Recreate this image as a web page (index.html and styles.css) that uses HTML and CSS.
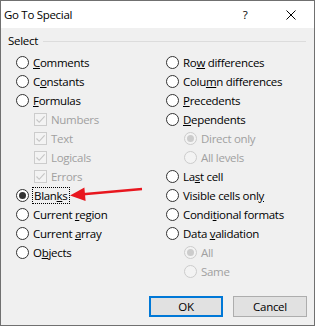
FILE: index.html
```html
<!DOCTYPE html>
<html lang="en">
<head>
    <meta charset="UTF-8">
    <title>Go To Special</title>
    <link rel="stylesheet" href="styles.css">
</head>
<body>
    <div class="dialog">
        <header class="titlebar">
            <span class="title">Go To Special</span>
            <span class="help">?</span>
            <span class="close">
                <svg width="10" height="10" viewBox="0 0 10 10"><path d="M0.5 0.5L9.5 9.5M9.5 0.5L0.5 9.5" stroke="#000" stroke-width="1"/></svg>
            </span>
        </header>

        <main class="content">
            <div class="group-head">
                <span>Select</span>
                <span class="group-line"></span>
            </div>

            <section class="options">
                <!-- left column -->
                <div class="col">
                    <div class="row"><span class="radio"></span><span><u>C</u>omments</span></div>
                    <div class="row"><span class="radio"></span><span>C<u>o</u>nstants</span></div>
                    <div class="row"><span class="radio"></span><span><u>F</u>ormulas</span></div>
                    <div class="row sub disabled"><span class="check"><svg width="11" height="11" viewBox="0 0 11 11"><path d="M1.5 5.5L4.2 8.3L9.6 2.4" fill="none" stroke="#c4c4c4" stroke-width="1.1"/></svg></span><span>Numbers</span></div>
                    <div class="row sub disabled"><span class="check"><svg width="11" height="11" viewBox="0 0 11 11"><path d="M1.5 5.5L4.2 8.3L9.6 2.4" fill="none" stroke="#c4c4c4" stroke-width="1.1"/></svg></span><span>Text</span></div>
                    <div class="row sub disabled"><span class="check"><svg width="11" height="11" viewBox="0 0 11 11"><path d="M1.5 5.5L4.2 8.3L9.6 2.4" fill="none" stroke="#c4c4c4" stroke-width="1.1"/></svg></span><span>Logicals</span></div>
                    <div class="row sub disabled"><span class="check"><svg width="11" height="11" viewBox="0 0 11 11"><path d="M1.5 5.5L4.2 8.3L9.6 2.4" fill="none" stroke="#c4c4c4" stroke-width="1.1"/></svg></span><span>Errors</span></div>
                    <div class="row"><span class="radio checked"></span><span class="focus">Blan<u>k</u>s</span></div>
                    <div class="row"><span class="radio"></span><span>Current <u>r</u>egion</span></div>
                    <div class="row"><span class="radio"></span><span>Current <u>a</u>rray</span></div>
                    <div class="row"><span class="radio"></span><span>O<u>b</u>jects</span></div>
                </div>

                <!-- right column -->
                <div class="col">
                    <div class="row"><span class="radio"></span><span>Ro<u>w</u> differences</span></div>
                    <div class="row"><span class="radio"></span><span>Colu<u>m</u>n differences</span></div>
                    <div class="row"><span class="radio"></span><span><u>P</u>recedents</span></div>
                    <div class="row"><span class="radio"></span><span><u>D</u>ependents</span></div>
                    <div class="row sub disabled"><span class="radio checked"></span><span>Direct only</span></div>
                    <div class="row sub disabled"><span class="radio"></span><span>All levels</span></div>
                    <div class="row"><span class="radio"></span><span>La<u>s</u>t cell</span></div>
                    <div class="row"><span class="radio"></span><span>Visible cells onl<u>y</u></span></div>
                    <div class="row"><span class="radio"></span><span>Condi<u>t</u>ional formats</span></div>
                    <div class="row"><span class="radio"></span><span>Data <u>v</u>alidation</span></div>
                    <div class="row sub disabled"><span class="radio checked"></span><span>All</span></div>
                    <div class="row sub disabled"><span class="radio"></span><span>Same</span></div>
                </div>
            </section>

            <footer class="buttons">
                <button class="btn default">OK</button>
                <button class="btn">Cancel</button>
            </footer>
        </main>

        <!-- red pointer drawn over the dialog -->
        <svg class="arrow" width="315" height="326" viewBox="0 0 315 326">
            <path d="M142 189L83 194.3" stroke="#e8171f" stroke-width="2.4" fill="none"/>
            <polygon points="70,195.5 84.4,187.6 85.6,201" fill="#e8171f"/>
        </svg>
    </div>
</body>
</html>
```

FILE: styles.css
```css
body {
    margin: 0;
    font-family: "Open Sans", "Noto Sans", sans-serif;
    font-size: 11.5px;
    letter-spacing: -0.3px;
    color: #000;
}

.dialog {
    position: relative;
    width: 315px;
    height: 326px;
    box-sizing: border-box;
    border: 1px solid #707070;
    background-color: #f0f0f0;
    display: flex;
    flex-direction: column;
}

.titlebar {
    height: 27px;
    display: flex;
    align-items: center;
    background-color: #fff;
}

.title {
    flex: 1;
    padding-left: 3px;
}

.help {
    width: 24px;
    text-align: center;
    margin-right: 11px;
}

.close {
    width: 46px;
    display: flex;
    justify-content: center;
    align-items: center;
}

.content {
    flex: 1;
    display: flex;
    flex-direction: column;
}

.group-head {
    display: flex;
    align-items: center;
    gap: 5px;
    height: 16px;
    line-height: 16px;
    padding: 5px 8px 0 7px;
}

.group-line {
    flex: 1;
    height: 1px;
    background-color: #dcdcdc;
}

.options {
    display: flex;
    padding: 4px 0 0 15px;
}

.col {
    display: flex;
    flex-direction: column;
}

.col:first-child {
    width: 150px;
}

.row {
    display: flex;
    align-items: center;
    height: 19px;
    white-space: nowrap;
}

.row.sub {
    padding-left: 18px;
}

.disabled {
    color: #a0a0a0;
}

.radio {
    width: 13px;
    height: 13px;
    box-sizing: border-box;
    border: 1px solid #333;
    border-radius: 50%;
    background-color: #fff;
    margin-right: 4px;
    display: flex;
    align-items: center;
    justify-content: center;
    flex-shrink: 0;
}

.radio.checked::after {
    content: "";
    width: 7px;
    height: 7px;
    border-radius: 50%;
    background-color: #333;
}

.disabled .radio {
    border-color: #cccccc;
    background-color: #f3f3f3;
}

.disabled .radio.checked::after {
    background-color: #cccccc;
}

.check {
    width: 13px;
    height: 13px;
    box-sizing: border-box;
    border: 1px solid #cccccc;
    background-color: #f3f3f3;
    margin-right: 4px;
    display: flex;
    align-items: center;
    justify-content: center;
    flex-shrink: 0;
}

.check svg {
    display: block;
}

.focus {
    outline: 1px dotted #000;
    outline-offset: 0;
    padding: 0 1px;
    line-height: 15px;
}

.buttons {
    display: flex;
    justify-content: flex-end;
    gap: 10px;
    padding: 0 7px 0 0;
    margin-top: 15px;
}

.btn {
    width: 74px;
    height: 21px;
    box-sizing: border-box;
    font-family: inherit;
    font-size: 11.5px;
    letter-spacing: -0.3px;
    background-color: #e1e1e1;
    border: 1px solid #adadad;
    padding: 0;
    color: #000;
}

.btn.default {
    border: 2px solid #0078d7;
}

.arrow {
    position: absolute;
    left: -1px;
    top: -1px;
    pointer-events: none;
}
```
